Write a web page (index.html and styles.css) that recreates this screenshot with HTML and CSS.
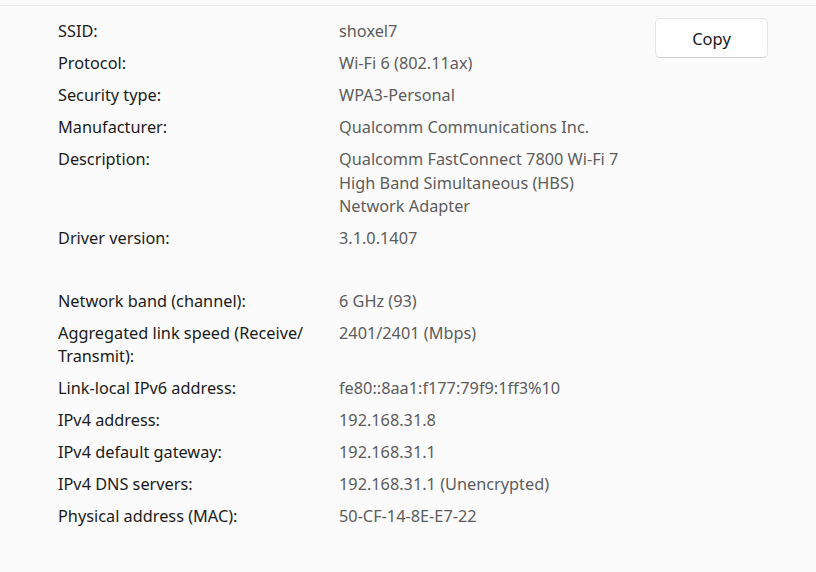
FILE: index.html
```html
<!DOCTYPE html>
<html>
<head>
<meta charset="utf-8">
<link rel="stylesheet" href="styles.css">
</head>
<body>
<div class="topline"></div>
<div class="panel">
  <dl class="props">
    <dt>SSID:</dt><dd>shoxel7</dd>
    <dt>Protocol:</dt><dd>Wi-Fi 6 (802.11ax)</dd>
    <dt>Security type:</dt><dd>WPA3-Personal</dd>
    <dt>Manufacturer:</dt><dd>Qualcomm Communications Inc.</dd>
    <dt>Description:</dt><dd>Qualcomm FastConnect 7800 Wi-Fi 7<br>High Band Simultaneous (HBS)<br>Network Adapter</dd>
    <dt>Driver version:</dt><dd>3.1.0.1407</dd>
    <dt class="blank"></dt><dd class="blank"></dd>
    <dt>Network band (channel):</dt><dd>6 GHz (93)</dd>
    <dt>Aggregated link speed (Receive/ Transmit):</dt><dd>2401/2401 (Mbps)</dd>
    <dt>Link-local IPv6 address:</dt><dd>fe80::8aa1:f177:79f9:1ff3%10</dd>
    <dt>IPv4 address:</dt><dd>192.168.31.8</dd>
    <dt>IPv4 default gateway:</dt><dd>192.168.31.1</dd>
    <dt>IPv4 DNS servers:</dt><dd>192.168.31.1 (Unencrypted)</dd>
    <dt>Physical address (MAC):</dt><dd>50-CF-14-8E-E7-22</dd>
  </dl>
  <div class="actions">
    <button class="copy">Copy</button>
  </div>
</div>
</body>
</html>
```
FILE: styles.css
```css
html, body {
  margin: 0;
  padding: 0;
  background: #fbfbfb;
  font-family: "Noto Sans", "Open Sans", sans-serif;
  font-size: 16.3px;
}
.topline {
  height: 5px;
  border-bottom: 1px solid #ededed;
}
.panel {
  display: flex;
  align-items: flex-start;
  padding: 14px 48px 0 58px;
}
.props {
  display: grid;
  grid-template-columns: 281px 300px;
  row-gap: 8.5px;
  margin: 0;
  line-height: 23.5px;
}
.props dt {
  color: #1a1a1a;
  padding-right: 16px;
}
.props dd {
  margin: 0;
  color: #5c5c5c;
  white-space: nowrap;
}
.props .blank {
  height: 22px;
}
.actions {
  margin-left: auto;
}
.copy {
  width: 113px;
  height: 40px;
  margin-top: -2px;
  background: #fefefe;
  border: 1px solid #e5e5e5;
  border-bottom-color: #d0d0d0;
  border-radius: 5px;
  font-family: inherit;
  font-size: 16.5px;
  color: #1a1a1a;
  padding: 0;
}
```
